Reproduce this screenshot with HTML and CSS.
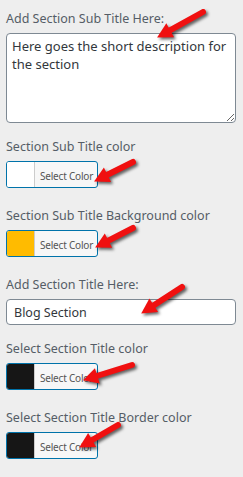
FILE: index.html
```html
<!DOCTYPE html>
<html lang="en">
<head>
    <meta charset="UTF-8">
    <meta name="viewport" content="width=device-width, initial-scale=1.0">
    <title>Section Settings</title>
    <link rel="stylesheet" href="styles.css">
</head>
<body>
    <div class="panel">
        <div class="field">
            <label class="field-label">Add Section Sub Title Here:</label>
            <textarea class="field-textarea">Here goes the short description for the section</textarea>
        </div>

        <div class="field field-color">
            <label class="field-label">Section Sub Title color</label>
            <button class="color-btn"><span class="swatch swatch-white"></span><span class="color-btn-text">Select Color</span></button>
        </div>

        <div class="field field-color">
            <label class="field-label">Section Sub Title Background color</label>
            <button class="color-btn"><span class="swatch swatch-yellow"></span><span class="color-btn-text">Select Color</span></button>
        </div>

        <div class="field">
            <label class="field-label">Add Section Title Here:</label>
            <input class="field-input" type="text" value="Blog Section">
        </div>

        <div class="field field-color">
            <label class="field-label">Select Section Title color</label>
            <button class="color-btn"><span class="swatch swatch-black"></span><span class="color-btn-text">Select Color</span></button>
        </div>

        <div class="field field-color">
            <label class="field-label">Select Section Title Border color</label>
            <button class="color-btn"><span class="swatch swatch-black"></span><span class="color-btn-text">Select Color</span></button>
        </div>
    </div>

    <!-- annotation arrows drawn over the panel -->
    <svg class="arrows" width="243" height="477" viewBox="0 0 243 477">
        <defs>
            <marker id="head" markerUnits="userSpaceOnUse" markerWidth="30" markerHeight="30" orient="auto" overflow="visible" refX="0" refY="0">
                <path d="M-4,-8 L11,0 L-4,8 Z" fill="#f01010"/>
            </marker>
        </defs>
        <g class="arrow-lines">
            <line x1="203" y1="12" x2="166.7" y2="32.1" marker-end="url(#head)"/>
            <line x1="133" y1="162" x2="103.9" y2="176.5" marker-end="url(#head)"/>
            <line x1="133" y1="228" x2="104.9" y2="242.4" marker-end="url(#head)"/>
            <line x1="182" y1="287" x2="150.4" y2="307.5" marker-end="url(#head)"/>
            <line x1="132" y1="365" x2="93.5" y2="377" marker-end="url(#head)"/>
            <line x1="118" y1="425" x2="88.7" y2="442" marker-end="url(#head)"/>
        </g>
    </svg>
</body>
</html>
```

FILE: styles.css
```css
body {
    margin: 0;
    background: #eeeeee;
    font-family: "Noto Sans", "Open Sans", sans-serif;
    position: relative;
    width: 243px;
    height: 477px;
    overflow: hidden;
}
.panel {
    padding: 9px 7px 0 6px;
}
.field {
    margin-bottom: 14px;
}
.field-color {
    margin-bottom: 18px;
}
.field-label {
    display: block;
    font-size: 12.5px;
    line-height: 20px;
    color: #555d66;
    margin-bottom: 4px;
}
.field-textarea {
    display: block;
    box-sizing: border-box;
    width: 230px;
    height: 90px;
    margin: 0;
    padding: 3px 0 3px 5px;
    border: 1px solid #7e8993;
    border-radius: 4px;
    background: #fff;
    overflow: hidden;
    font-family: inherit;
    font-size: 13px;
    line-height: 18px;
    color: #32373c;
}
.field-input {
    display: block;
    box-sizing: border-box;
    width: 230px;
    height: 26px;
    margin: 0;
    padding: 0 7px;
    border: 1px solid #7e8993;
    border-radius: 4px;
    background: #fff;
    font-family: inherit;
    font-size: 12.5px;
    color: #32373c;
}
.color-btn {
    display: flex;
    align-items: stretch;
    box-sizing: border-box;
    width: 92px;
    height: 27px;
    margin: 0;
    padding: 0;
    border: 1px solid #0073aa;
    border-radius: 3px;
    background: #f7f7f7;
    overflow: hidden;
    font-family: inherit;
    cursor: pointer;
}
.swatch {
    width: 27px;
    border-right: 1px solid #cccccc;
}
.swatch-white { background: #ffffff; }
.swatch-yellow { background: #ffbb00; }
.swatch-black { background: #161616; }
.color-btn-text {
    display: flex;
    align-items: center;
    padding: 2px 0 0 5px;
    font-size: 10px;
    letter-spacing: -0.2px;
    color: #555555;
    white-space: nowrap;
}
.arrows {
    position: absolute;
    left: 0;
    top: 0;
    pointer-events: none;
    filter: drop-shadow(2px 2px 1.5px rgba(0,0,0,0.6));
}
.arrow-lines line {
    stroke: #f01010;
    stroke-width: 6;
    stroke-linecap: round;
}
```
